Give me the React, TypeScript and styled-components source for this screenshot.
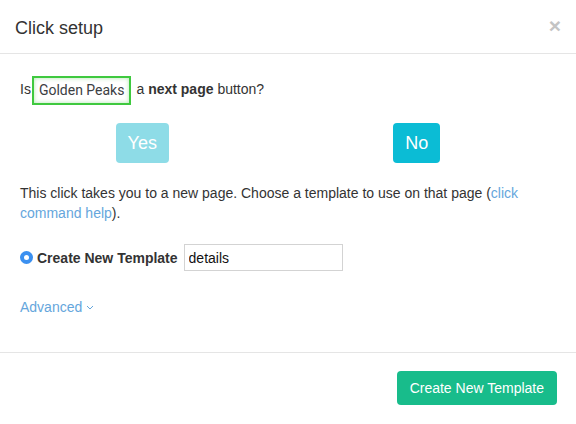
import React, { useState } from 'react';
import styled, { createGlobalStyle } from 'styled-components';

const GlobalStyle = createGlobalStyle`
  html, body {
    margin: 0;
    padding: 0;
    background: #ffffff;
  }
  body {
    font-family: "Liberation Sans", Arial, sans-serif;
    font-size: 14px;
    color: #333333;
  }
`;

// Styled Components
const Modal = styled.div`
  width: 576px;
  height: 424px;
  display: flex;
  flex-direction: column;
  background: #ffffff;
`;

const Header = styled.div`
  height: 54px;
  box-sizing: border-box;
  padding: 3px 15px 0;
  display: flex;
  align-items: center;
  justify-content: space-between;
  border-bottom: 1px solid #e5e5e5;
`;

const Title = styled.h4`
  margin: 0;
  font-size: 18px;
  font-weight: 400;
  color: #333333;
`;

const CloseButton = styled.button`
  background: none;
  border: none;
  padding: 0;
  margin-top: -6px;
  font-family: "Liberation Sans", Arial, sans-serif;
  font-size: 21px;
  font-weight: 700;
  line-height: 1;
  color: #c4c4c4;
  cursor: pointer;
`;

const Body = styled.div`
  flex: 1;
  padding: 20px 20px 0;
  border-bottom: 1px solid #e5e5e5;
`;

const Question = styled.div`
  display: flex;
  align-items: center;
  height: 30px;
  line-height: 20px;
`;

const ElementChip = styled.span`
  display: inline-flex;
  align-items: center;
  height: 29px;
  box-sizing: border-box;
  padding: 0 5px;
  margin: 2px 5px 0 1px;
  border: 2px solid #3fc93f;
  box-shadow: inset 0 0 4px rgba(80, 200, 80, 0.45);
  font-family: Roboto, "Open Sans", sans-serif;
  font-size: 14px;
  color: #3c4043;
`;

const ChoiceRow = styled.div`
  display: grid;
  grid-template-columns: 1fr 1fr;
  margin: 19px 2px 0 -15px;
`;

const ChoiceButton = styled.button<{ $muted?: boolean }>`
  justify-self: center;
  height: 40px;
  padding: 0 12px;
  border: none;
  border-radius: 4px;
  background: ${({ $muted }) => ($muted ? '#8edce7' : '#0bbcd5')};
  color: #ffffff;
  font-family: "Liberation Sans", Arial, sans-serif;
  font-size: 18px;
  cursor: pointer;
`;

const Paragraph = styled.p`
  margin: 20px 0 0;
  line-height: 20px;
`;

const Link = styled.a`
  color: #65a6dc;
  text-decoration: none;
  cursor: pointer;
`;

const TemplateRow = styled.div`
  display: flex;
  align-items: center;
  margin-top: 21px;
`;

const RadioDot = styled.span`
  width: 13px;
  height: 13px;
  border-radius: 50%;
  background: #3b90f0;
  display: inline-flex;
  align-items: center;
  justify-content: center;
  margin-right: 4px;

  &::after {
    content: '';
    width: 5px;
    height: 5px;
    border-radius: 50%;
    background: #ffffff;
  }
`;

const RadioLabel = styled.label`
  font-weight: 700;
  margin-right: 6px;
`;

const TextInput = styled.input`
  width: 159px;
  height: 27px;
  box-sizing: border-box;
  padding: 0 4px;
  border: 1px solid #d3d3d3;
  font-family: "Liberation Sans", Arial, sans-serif;
  font-size: 14px;
  color: #111111;
  outline: none;
`;

const Advanced = styled(Link)`
  display: inline-flex;
  align-items: center;
  gap: 4px;
  margin-top: 26px;
  line-height: 20px;
`;

const Footer = styled.div`
  height: 71px;
  box-sizing: border-box;
  display: flex;
  align-items: center;
  justify-content: flex-end;
  padding: 0 19px 1px 0;
`;

const PrimaryButton = styled.button`
  height: 34px;
  padding: 0 13px;
  border: none;
  border-radius: 4px;
  background: #18bc8b;
  color: #ffffff;
  font-family: "Liberation Sans", Arial, sans-serif;
  font-size: 14px;
  cursor: pointer;
`;

const App: React.FC = () => {
  const [templateName, setTemplateName] = useState('details');

  return (
    <>
      <GlobalStyle />
      <Modal>
        <Header>
          <Title>Click setup</Title>
          <CloseButton aria-label="Close">×</CloseButton>
        </Header>
        <Body>
          <Question>
            <span>Is</span>
            <ElementChip>Golden Peaks</ElementChip>
            <span>
              a <strong>next page</strong> button?
            </span>
          </Question>
          <ChoiceRow>
            <ChoiceButton $muted>Yes</ChoiceButton>
            <ChoiceButton>No</ChoiceButton>
          </ChoiceRow>
          <Paragraph>
            This click takes you to a new page. Choose a template to use on that page (
            <Link>click command help</Link>).
          </Paragraph>
          <TemplateRow>
            <RadioDot />
            <RadioLabel>Create New Template</RadioLabel>
            <TextInput value={templateName} onChange={e => setTemplateName(e.target.value)} />
          </TemplateRow>
          <Advanced>
            Advanced
            <svg width="8" height="5" viewBox="0 0 8 5" fill="none">
              <path d="M1 1l3 3 3-3" stroke="#65a6dc" strokeWidth="1" />
            </svg>
          </Advanced>
        </Body>
        <Footer>
          <PrimaryButton>Create New Template</PrimaryButton>
        </Footer>
      </Modal>
    </>
  );
};

export default App;
